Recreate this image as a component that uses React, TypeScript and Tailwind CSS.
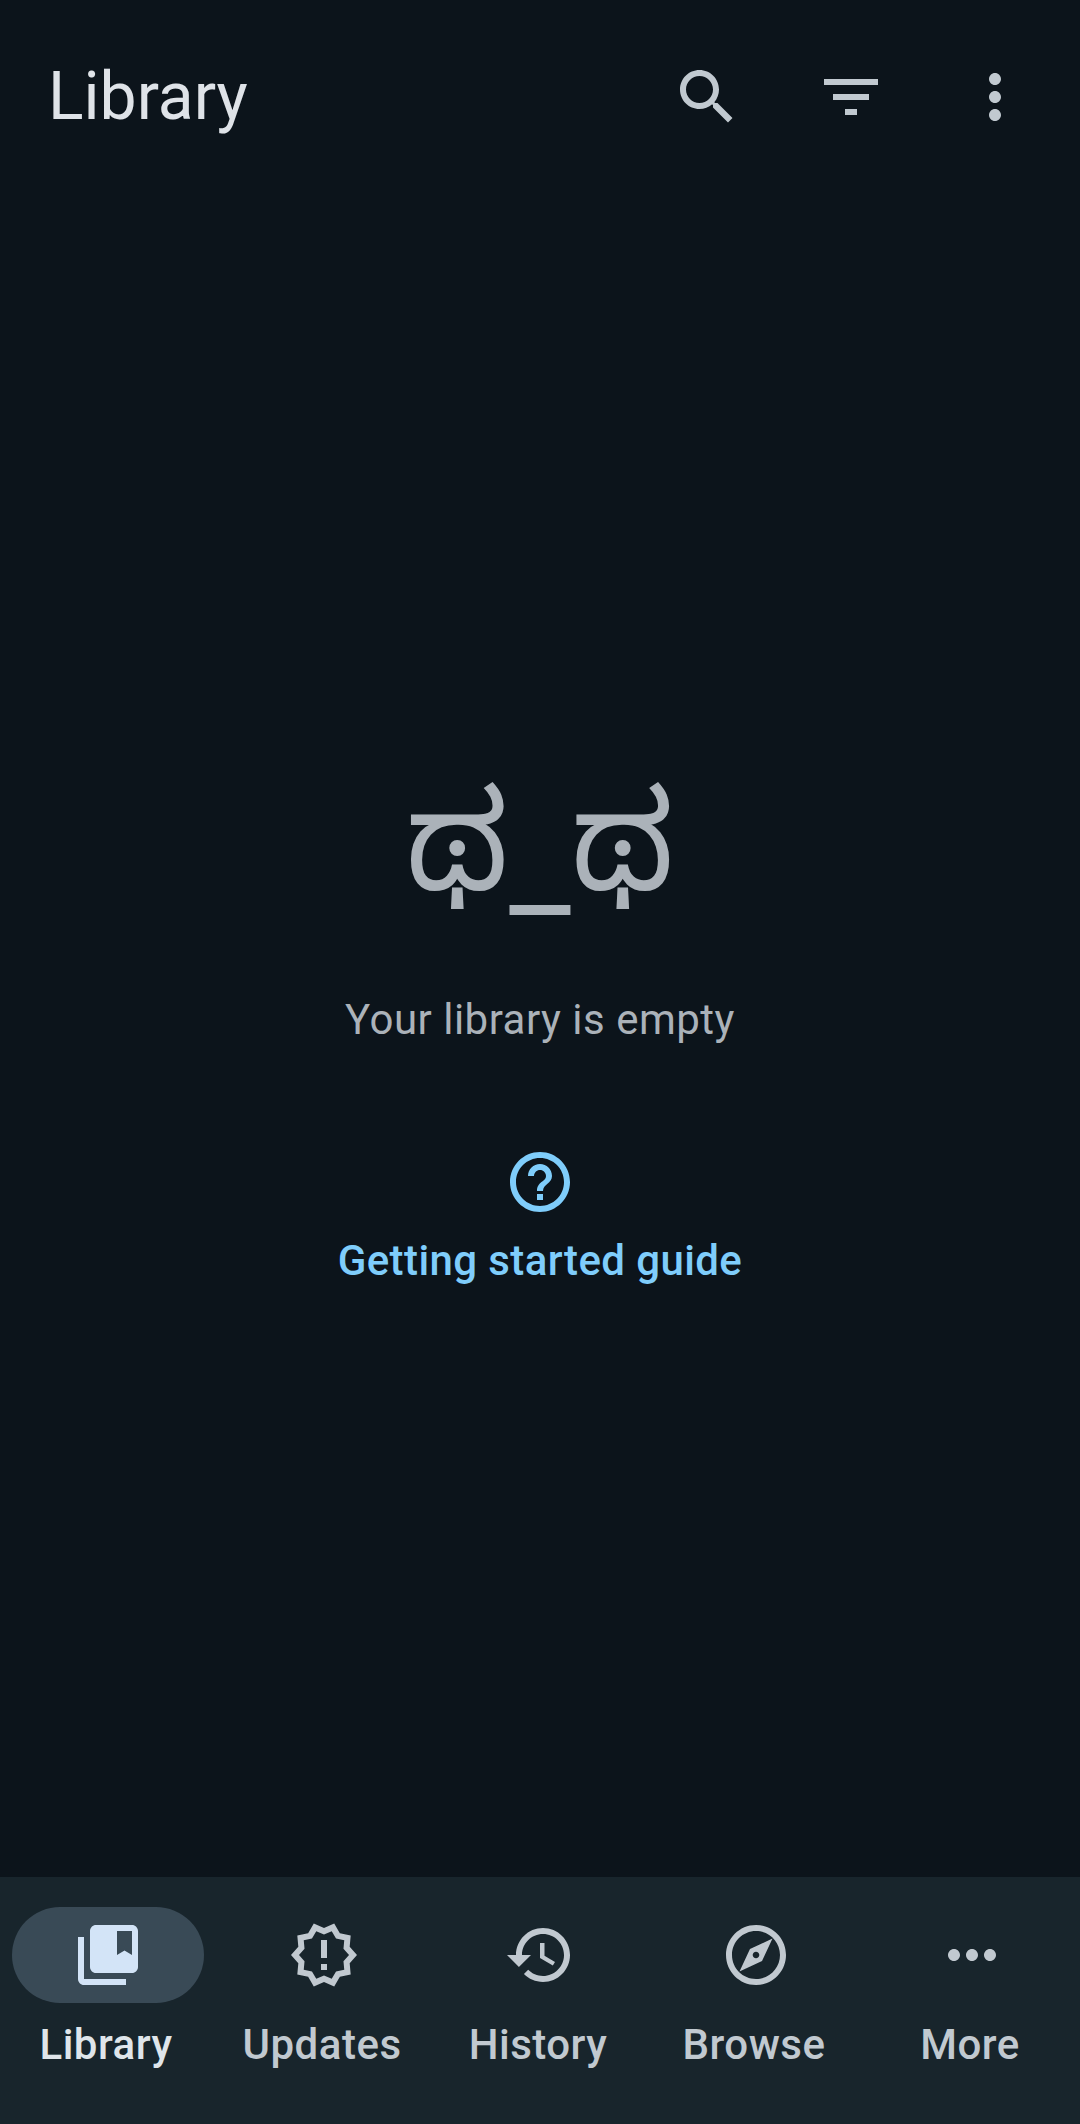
import React from "react";

const paths = {
    search: "M15.5 14h-.79l-.28-.27C15.41 12.59 16 11.11 16 9.5 16 5.91 13.09 3 9.5 3S3 5.91 3 9.5 5.91 16 9.5 16c1.61 0 3.09-.59 4.23-1.57l.27.28v.79l5 4.99L20.49 19l-4.99-5zm-6 0C7.01 14 5 11.99 5 9.5S7.01 5 9.5 5 14 7.01 14 9.5 11.99 14 9.5 14z",
    filter: "M10 18h4v-2h-4v2zM3 6v2h18V6H3zm3 7h12v-2H6v2z",
    moreVert: "M12 8c1.1 0 2-.9 2-2s-.9-2-2-2-2 .9-2 2 .9 2 2 2zm0 2c-1.1 0-2 .9-2 2s.9 2 2 2 2-.9 2-2-.9-2-2-2zm0 6c-1.1 0-2 .9-2 2s.9 2 2 2 2-.9 2-2-.9-2-2-2z",
    help: "M11 18h2v-2h-2v2zm1-16C6.48 2 2 6.48 2 12s4.48 10 10 10 10-4.48 10-10S17.52 2 12 2zm0 18c-4.41 0-8-3.59-8-8s3.59-8 8-8 8 3.59 8 8-3.59 8-8 8zm0-14c-2.21 0-4 1.79-4 4h2c0-1.1.9-2 2-2s2 .9 2 2c0 2-3 1.75-3 5h2c0-2.25 3-2.5 3-5 0-2.21-1.79-4-4-4z",
    library: "M4 6H2v14c0 1.1.9 2 2 2h14v-2H4V6zM20 2H8c-1.1 0-2 .9-2 2v12c0 1.1.9 2 2 2h12c1.1 0 2-.9 2-2V4c0-1.1-.9-2-2-2zm0 10l-2.5-1.5L15 12V4h5v8z",
    updates: "M23 12l-2.44-2.78.34-3.68-3.61-.82-1.89-3.18L12 3 8.6 1.54 6.71 4.72l-3.61.81.34 3.68L1 12l2.44 2.78-.34 3.69 3.61.82 1.89 3.18L12 21l3.4 1.46 1.89-3.18 3.61-.82-.34-3.68L23 12zm-4.51 2.11l.26 2.79-2.74.62-1.43 2.41L12 18.82l-2.58 1.11-1.43-2.41-2.74-.62.26-2.8L3.66 12l1.85-2.12-.26-2.78 2.74-.61 1.43-2.41L12 5.18l2.58-1.11 1.43 2.41 2.74.62-.26 2.79L20.34 12l-1.85 2.11zM11 15h2v2h-2zm0-8h2v6h-2z",
    history: "M13 3c-4.97 0-9 4.03-9 9H1l3.89 3.89.07.14L9 12H6c0-3.87 3.13-7 7-7s7 3.13 7 7-3.13 7-7 7c-1.93 0-3.68-.79-4.94-2.06l-1.42 1.42C8.27 19.99 10.51 21 13 21c4.97 0 9-4.03 9-9s-4.03-9-9-9zm-1 5v5l4.28 2.54.72-1.21-3.5-2.08V8H12z",
    browse: "M12 2C6.48 2 2 6.48 2 12s4.48 10 10 10 10-4.48 10-10S17.52 2 12 2zm0 18c-4.41 0-8-3.59-8-8s3.59-8 8-8 8 3.59 8 8-3.59 8-8 8zm-5.5-2.5l7.51-3.49L17.5 6.5 9.99 9.99 6.5 17.5zm5.5-6.6c.61 0 1.1.49 1.1 1.1s-.49 1.1-1.1 1.1-1.1-.49-1.1-1.1.49-1.1 1.1-1.1z",
    more: "M6 10c-1.1 0-2 .9-2 2s.9 2 2 2 2-.9 2-2-.9-2-2-2zm12 0c-1.1 0-2 .9-2 2s.9 2 2 2 2-.9 2-2-.9-2-2-2zm-6 0c-1.1 0-2 .9-2 2s.9 2 2 2 2-.9 2-2-.9-2-2-2z",
};

function Icon({ d, className }: { d: string; className: string }) {
    return (
        <svg viewBox="0 0 24 24" fill="currentColor" className={className}>
            <path d={d} />
        </svg>
    );
}

function NavItem({ d, label, active }: { d: string; label: string; active?: boolean }) {
    return (
        <div className="flex flex-col items-center">
            <div className={`w-[192px] h-[96px] rounded-full flex items-center justify-center ${active ? "bg-[#394a56] text-[#d3e4f7]" : "text-[#c1c9d0]"}`}>
                <Icon d={d} className="w-[72px] h-[72px]" />
            </div>
            <div className={`mt-[18px] pr-[4px] text-[42px] leading-[48px] font-medium tracking-[0.5px] ${active ? "text-[#dfe5ea]" : "text-[#c1c9d0]"}`}>{label}</div>
        </div>
    );
}

export default function App() {
    return (
        <div className="w-[1080px] h-[2124px] flex flex-col bg-[#0c141b] font-['Roboto',sans-serif]">
            <div className="h-[194px] pl-[48px] pr-[49px] flex items-center justify-between shrink-0">
                <div className="text-[66px] leading-[80px] text-[#dfe3e8]">Library</div>
                <div className="flex items-center gap-[72px] text-[#c1c9d0]">
                    <Icon d={paths.search} className="w-[72px] h-[72px]" />
                    <Icon d={paths.filter} className="w-[72px] h-[72px]" />
                    <Icon d={paths.moreVert} className="w-[72px] h-[72px]" />
                </div>
            </div>
            <div className="flex-1 flex flex-col items-center pt-[569px]">
                <div className="text-[136px] leading-[160px] text-[#abb2b9] font-['Roboto','Noto_Sans_Kannada','Noto_Sans',sans-serif]">ಥ<span className="align-[-16px]">_</span>ಥ</div>
                <div className="mt-[53px] text-[42px] leading-[56px] tracking-[0.5px] text-[#abb2b9]">Your library is empty</div>
                <div className="mt-[98px] flex flex-col items-center text-[#7fcdfb]">
                    <Icon d={paths.help} className="w-[72px] h-[72px]" />
                    <div className="mt-[15px] text-[42px] leading-[56px] font-medium tracking-[0.4px]">Getting started guide</div>
                </div>
            </div>
            <div className="h-[247px] shrink-0 bg-[#18252c] pt-[30px] grid grid-cols-5 justify-items-center">
                <NavItem d={paths.library} label="Library" active />
                <NavItem d={paths.updates} label="Updates" />
                <NavItem d={paths.history} label="History" />
                <NavItem d={paths.browse} label="Browse" />
                <NavItem d={paths.more} label="More" />
            </div>
        </div>
    );
}
